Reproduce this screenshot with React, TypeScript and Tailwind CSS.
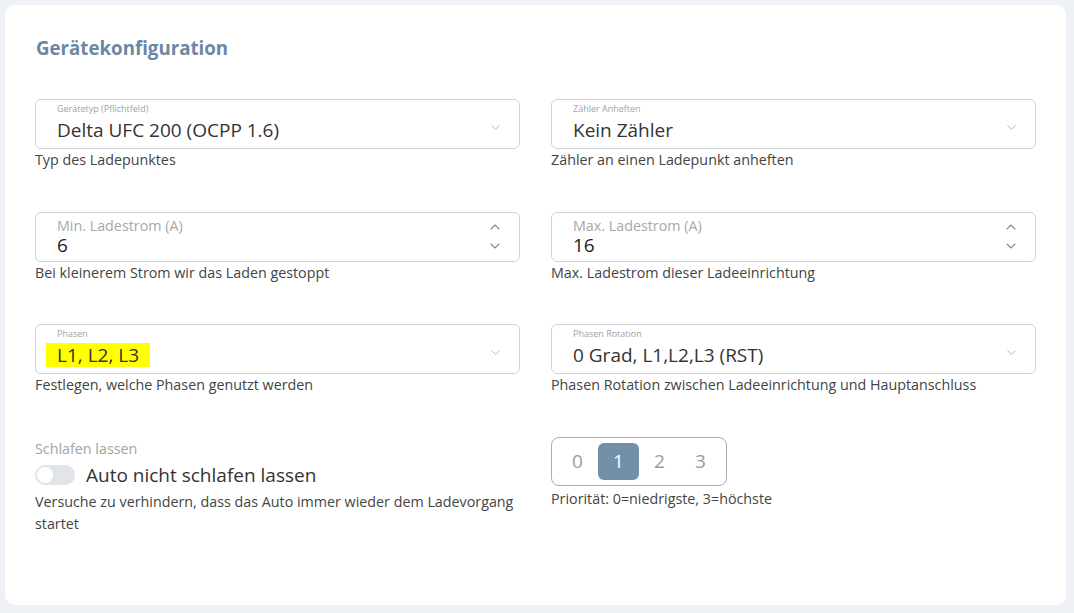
import { ChevronDown, ChevronUp } from 'lucide-react';

function SelectField({ label, value, highlight }: { label: string; value: string; highlight?: boolean }) {
    return (
        <div className="relative h-[50px] rounded-md border border-[#cfd3d8] bg-white">
            <div className="absolute left-[21px] top-[2px] text-[9px] text-[#a3a3a3]">{label}</div>
            <div className="absolute left-[21px] top-[18px] flex items-center">
                <span className={highlight ? 'bg-[#ffff00] px-[11px] -ml-[11px] text-[19px] leading-[24px] text-[#333]' : 'text-[19px] leading-[24px] text-[#333]'}>
                    {value}
                </span>
            </div>
            <ChevronDown className="absolute right-[16px] top-[20px] h-[15px] w-[15px] text-[#aab6c2]" strokeWidth={1.5} />
        </div>
    );
}

function NumberField({ label, value }: { label: string; value: string }) {
    return (
        <div className="relative h-[50px] rounded-md border border-[#cfd3d8] bg-white">
            <div className="absolute left-[21px] top-[5px] text-[14.3px] leading-[16px] text-[#a8a8a8]">{label}</div>
            <div className="absolute left-[21px] top-[22px] text-[19px] leading-[21px] text-[#222]">{value}</div>
            <ChevronUp className="absolute right-[16px] top-[6px] h-[16px] w-[16px] text-[#7f8a96]" strokeWidth={1.6} />
            <ChevronDown className="absolute right-[16px] top-[25px] h-[16px] w-[16px] text-[#7f8a96]" strokeWidth={1.6} />
        </div>
    );
}

function Helper({ children }: { children: React.ReactNode }) {
    return <p className="mt-0 text-[14.3px] leading-[21px] text-[#444]">{children}</p>;
}

export default function App() {
    return (
        <div className="min-h-screen bg-[#eef2f6] p-[5px] pr-[8px]" style={{ fontFamily: '"Open Sans", "Noto Sans", sans-serif' }}>
            <div className="h-[600px] rounded-[10px] bg-white px-[30px] pt-[33px]">
                <h2 className="pl-[1px] text-[18.7px] font-bold leading-[20px] text-[#6c87a3]">Gerätekonfiguration</h2>

                <div className="mt-[41px] grid grid-cols-2 gap-x-[31px]">
                    <div className="h-[113px]">
                        <SelectField label="Gerätetyp (Pflichtfeld)" value="Delta UFC 200 (OCPP 1.6)" />
                        <Helper>Typ des Ladepunktes</Helper>
                    </div>
                    <div className="h-[113px]">
                        <SelectField label="Zähler Anheften" value="Kein Zähler" />
                        <Helper>Zähler an einen Ladepunkt anheften</Helper>
                    </div>

                    <div className="h-[112px]">
                        <NumberField label="Min. Ladestrom (A)" value="6" />
                        <Helper>Bei kleinerem Strom wir das Laden gestoppt</Helper>
                    </div>
                    <div className="h-[112px]">
                        <NumberField label="Max. Ladestrom (A)" value="16" />
                        <Helper>Max. Ladestrom dieser Ladeeinrichtung</Helper>
                    </div>

                    <div className="h-[113px]">
                        <SelectField label="Phasen" value="L1, L2, L3" highlight />
                        <Helper>Festlegen, welche Phasen genutzt werden</Helper>
                    </div>
                    <div className="h-[113px]">
                        <SelectField label="Phasen Rotation" value="0 Grad, L1,L2,L3 (RST)" />
                        <Helper>Phasen Rotation zwischen Ladeeinrichtung und Hauptanschluss</Helper>
                    </div>

                    <div>
                        <div className="pt-[2px] text-[14.3px] leading-[20px] text-[#a3a3a3]">Schlafen lassen</div>
                        <label className="mt-[4px] flex items-center gap-[11px]">
                            <span className="relative h-[20px] w-[40px] rounded-full bg-[#e1e4e8]">
                                <span className="absolute left-[2px] top-[2px] h-[16px] w-[16px] rounded-full bg-white" />
                            </span>
                            <span className="text-[19px] leading-[24px] text-[#333]">Auto nicht schlafen lassen</span>
                        </label>
                        <p className="mt-[4px] text-[14.3px] leading-[22px] text-[#444]">
                            Versuche zu verhindern, dass das Auto immer wieder dem Ladevorgang startet
                        </p>
                    </div>
                    <div>
                        <div className="inline-flex h-[49px] items-center rounded-lg border border-[#a9adb2] px-[5px]">
                            {['0', '1', '2', '3'].map((n) => (
                                <button
                                    key={n}
                                    className={
                                        n === '1'
                                            ? 'h-[37px] w-[41px] rounded-md bg-[#7390a8] text-[19px] text-white'
                                            : 'h-[37px] w-[41px] rounded-md text-[19px] text-[#9a9a9a]'
                                    }
                                >
                                    {n}
                                </button>
                            ))}
                        </div>
                        <p className="mt-[2px] text-[14.3px] leading-[22px] text-[#444]">Priorität: 0=niedrigste, 3=höchste</p>
                    </div>
                </div>
            </div>
        </div>
    );
}
